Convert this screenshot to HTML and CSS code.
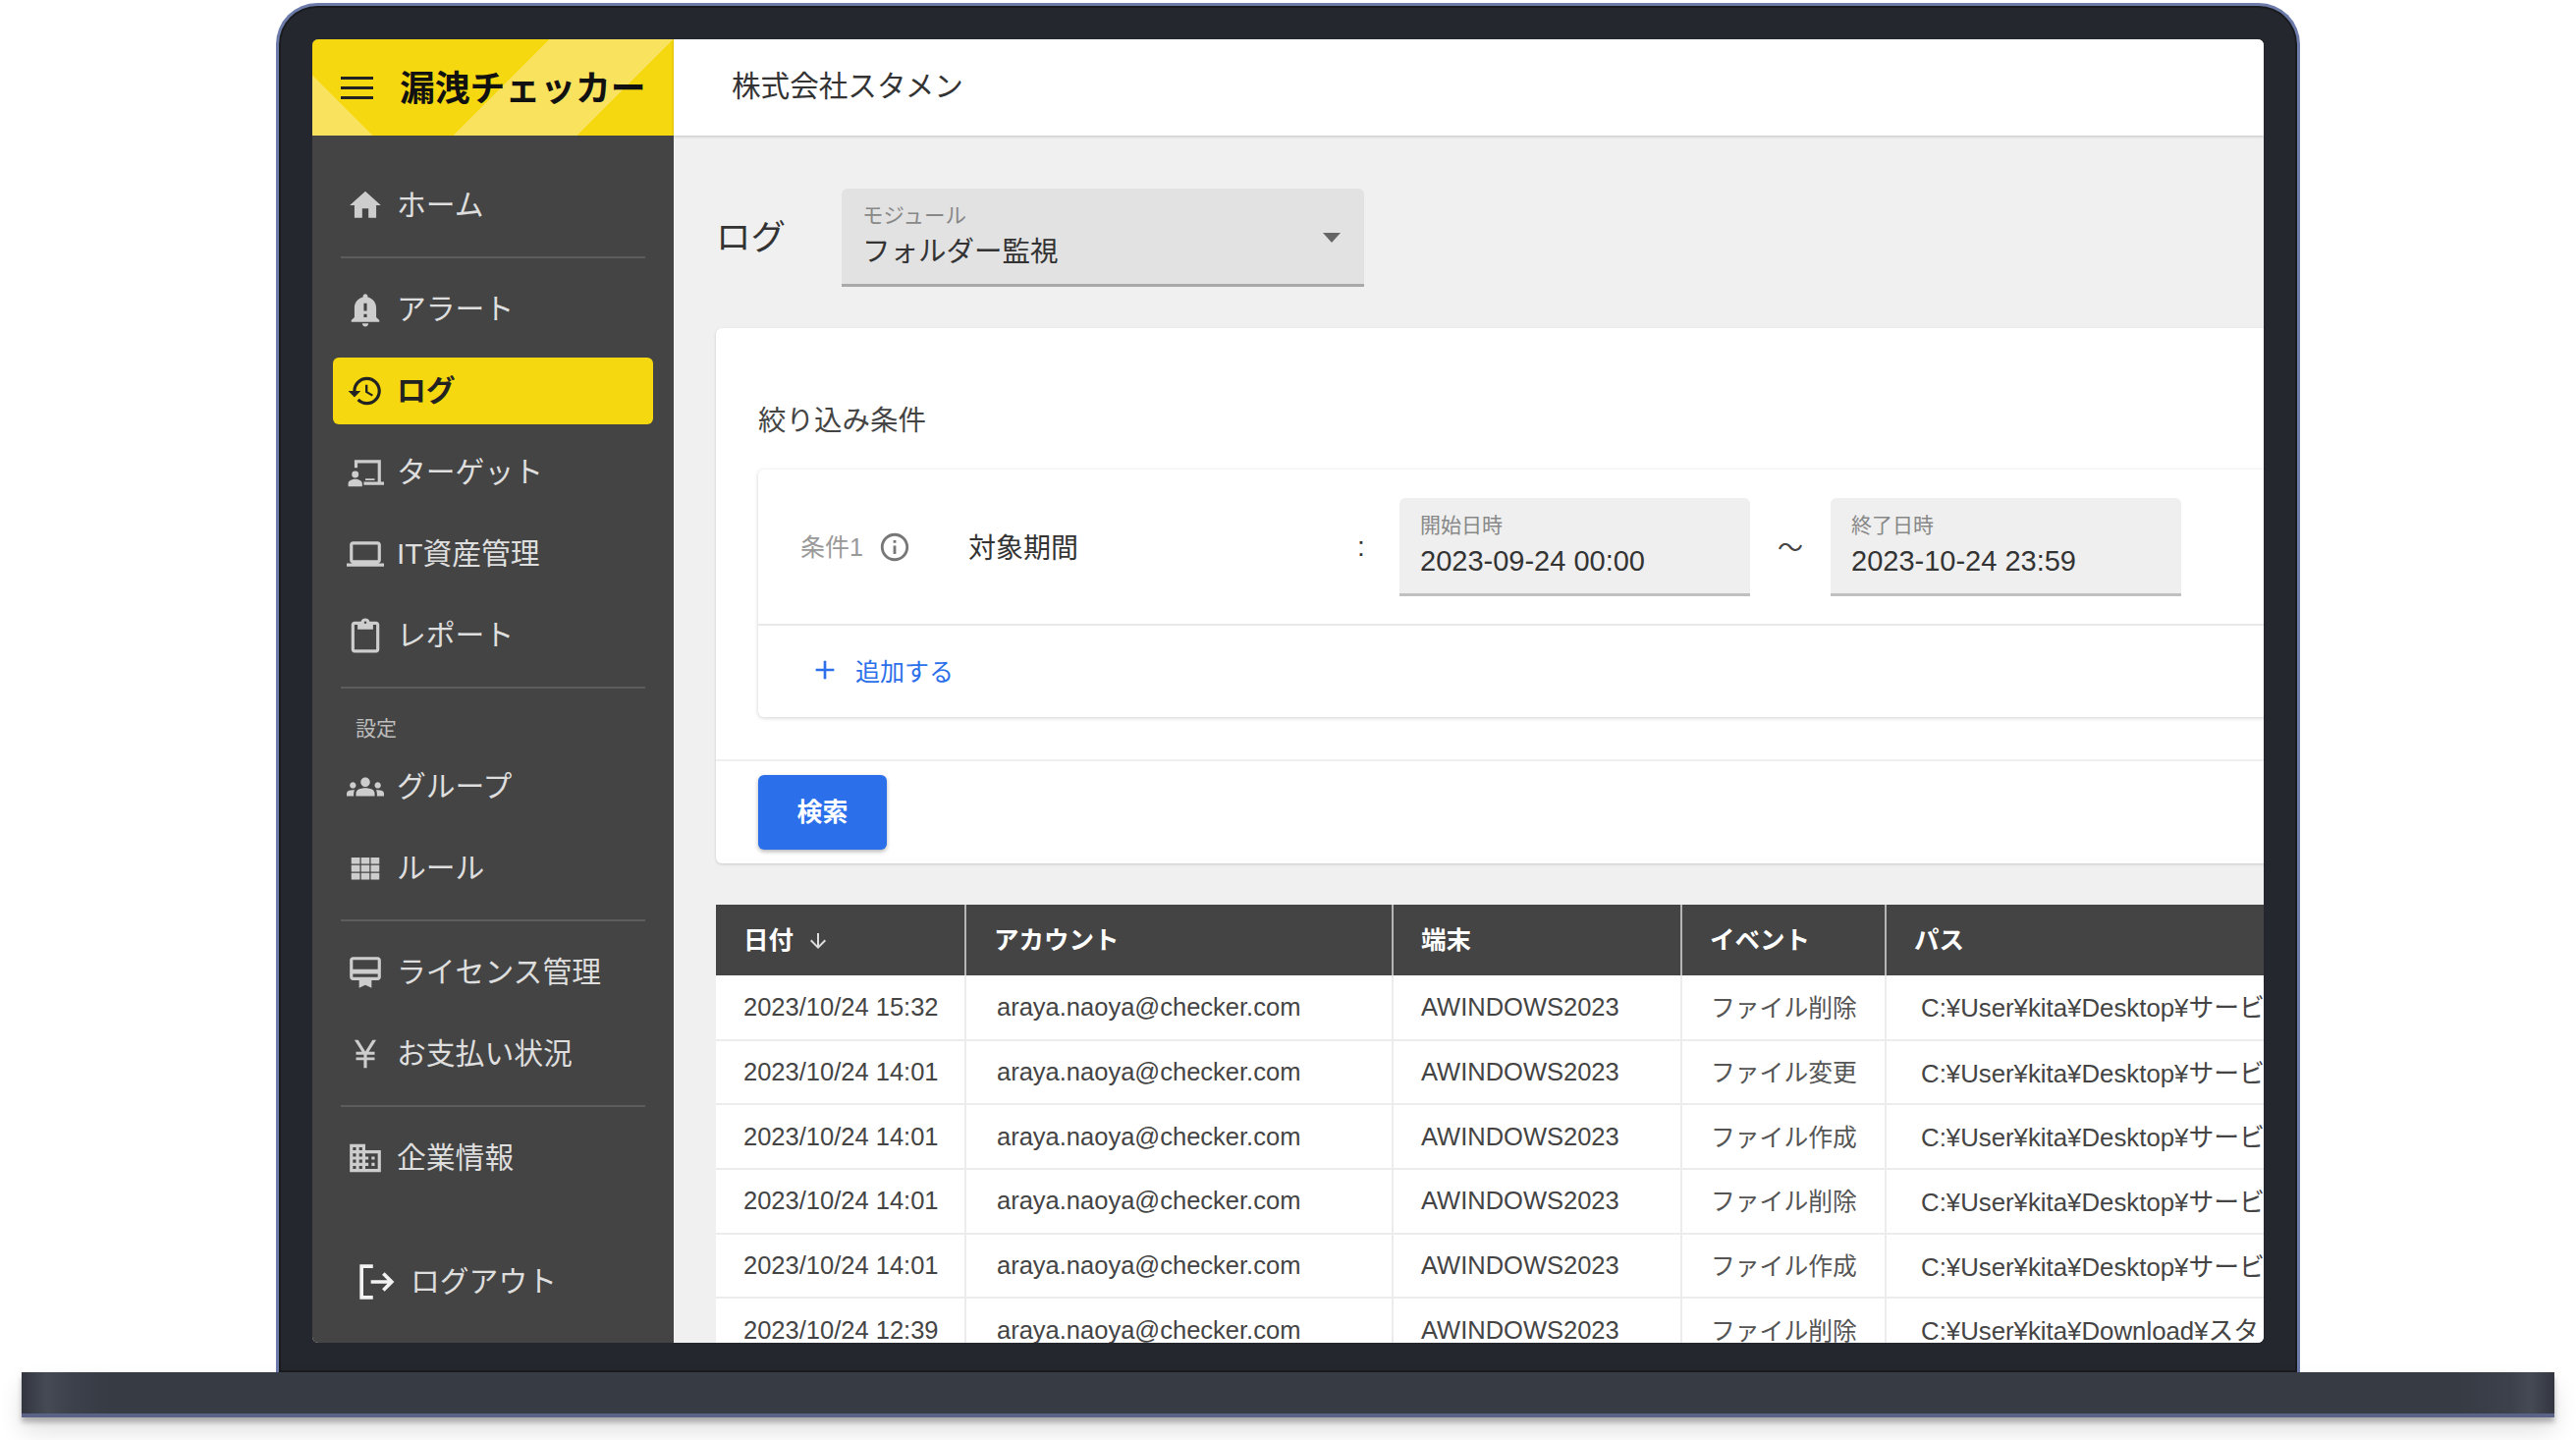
FILE: index.html
```html
<!DOCTYPE html>
<html lang="ja">

<head>
     <meta charset="UTF-8">
     <title>漏洩チェッカー</title>
     <link rel="stylesheet" href="styles.css">
</head>

<body>
     <div class="lid">
          <div class="screen">
               <aside class="sidebar">
                    <div class="logo">
                         <div class="burger"><span></span><span></span><span></span></div>
                         <div class="logo-text">漏洩チェッカー</div>
                    </div>
                    <nav class="nav">
                         <a class="nav-item"><svg viewBox="0 0 24 24"><path d="M10 20v-6h4v6h5v-8h3L12 3 2 12h3v8z"/></svg>ホーム</a>
                         <div class="divider"></div>
                         <a class="nav-item"><svg viewBox="0 0 24 24"><path d="M12 23c1.1 0 2-.9 2-2h-4c0 1.100.9 2 2 2zm7-6v-6c0-3.350-2.350-6.150-5.500-6.830V3.500c0-.83-.67-1.500-1.500-1.500s-1.500.67-1.500 1.500v.67C7.350 4.850 5 7.650 5 11v6l-2 2v1h18v-1l-2-2zm-6 0h-2v-2h2v2zm0-4h-2V8h2v5z"/></svg>アラート</a>
                         <a class="nav-item active"><svg viewBox="0 0 24 24"><path d="M13 3c-4.970 0-9 4.030-9 9H1l3.890 3.890.07.14L9 12H6c0-3.870 3.130-7 7-7s7 3.130 7 7-3.130 7-7 7c-1.930 0-3.680-.79-4.940-2.060l-1.420 1.420C8.270 19.990 10.510 21 13 21c4.970 0 9-4.030 9-9s-4.030-9-9-9zm-1 5v5l4.280 2.540.72-1.210-3.500-2.080V8H12z"/></svg>ログ</a>
                         <a class="nav-item"><svg viewBox="0 0 24 24"><path d="M5 4h17v14h2v2H11v-2h9V6H7v3H5V4zM5.500 11a2.200 2.200 0 1 1 0 4.400 2.200 2.200 0 0 1 0-4.400zM1 21v-2c0-1.700 2.500-2.800 4.500-2.800S10 17.300 10 19v2H1zM12 16h6v1h-6z"/></svg>ターゲット</a>
                         <a class="nav-item"><svg viewBox="0 0 24 24"><path d="M20 18c1.100 0 2-.9 2-2V6c0-1.100-.9-2-2-2H4c-1.100 0-2 .9-2 2v10c0 1.100.9 2 2 2H0v2h24v-2h-4zM4 6h16v10H4V6z"/></svg>IT資産管理</a>
                         <a class="nav-item"><svg viewBox="0 0 24 24"><path d="M19 3h-4.200C14.400 1.800 13.300 1 12 1s-2.400.8-2.800 2H5c-1.100 0-2 .9-2 2v16c0 1.100.9 2 2 2h14c1.100 0 2-.9 2-2V5c0-1.100-.9-2-2-2zm-7-.2c.4 0 .8.400.8.800s-.4.800-.8.800-.8-.4-.8-.8.400-.8.800-.8zM19 21H5V5h2v3h10V5h2v16z"/></svg>レポート</a>
                         <div class="divider"></div>
                         <div class="nav-label">設定</div>
                         <a class="nav-item"><svg viewBox="0 0 24 24"><path d="M4 13c1.100 0 2-.9 2-2s-.9-2-2-2-2 .9-2 2 .9 2 2 2zm1.130 1.100C4.760 14.040 4.390 14 4 14c-.99 0-1.930.21-2.780.58C.48 14.900 0 15.620 0 16.430V18h4.500v-1.610c0-.83.23-1.610.63-2.290zM20 13c1.100 0 2-.9 2-2s-.9-2-2-2-2 .9-2 2 .9 2 2 2zm4 3.430c0-.81-.48-1.530-1.220-1.850C21.930 14.210 20.990 14 20 14c-.39 0-.76.04-1.130.1.4.68.63 1.460.63 2.290V18H24v-1.570zM16.240 13.650c-1.170-.52-2.610-.9-4.240-.9-1.630 0-3.070.39-4.240.9C6.680 14.130 6 15.210 6 16.390V18h12v-1.610c0-1.180-.68-2.260-1.760-2.740zM12 12c1.660 0 3-1.340 3-3s-1.340-3-3-3-3 1.340-3 3 1.340 3 3 3z"/></svg>グループ</a>
                         <a class="nav-item"><svg viewBox="0 0 24 24"><path d="M3 5h5.500v4.200H3zM9.300 5h5.400v4.200H9.300zM15.500 5H21v4.200h-5.500zM3 10h5.500v4.200H3zM9.300 10h5.400v4.200H9.300zM15.500 10H21v4.200h-5.500zM3 15h5.500v4.200H3zM9.300 15h5.400v4.200H9.300zM15.500 15H21v4.200h-5.500z"/></svg>ルール</a>
                         <div class="divider"></div>
                         <a class="nav-item"><svg viewBox="0 0 24 24"><path d="M20 2H4c-1.100 0-2 .9-2 2v11c0 1.100.9 2 2 2h4v5l4-2 4 2v-5h4c1.100 0 2-.9 2-2V4c0-1.100-.9-2-2-2zm0 13H4v-2h16v2zm0-5H4V4h16v6z"/></svg>ライセンス管理</a>
                         <a class="nav-item"><svg viewBox="0 0 24 24"><path d="M5 3h2.400l4.600 7.400L16.600 3H19l-4.800 7.600H18v1.800h-5v1.800h5V16h-5v5h-2v-5H6v-1.800h5v-1.800H6v-1.800h3.800z"/></svg>お支払い状況</a>
                         <div class="divider"></div>
                         <a class="nav-item"><svg viewBox="0 0 24 24"><path d="M12 7V3H2v18h20V7H12zM6 19H4v-2h2v2zm0-4H4v-2h2v2zm0-4H4V9h2v2zm0-4H4V5h2v2zm4 12H8v-2h2v2zm0-4H8v-2h2v2zm0-4H8V9h2v2zm0-4H8V5h2v2zm10 12h-8v-2h2v-2h-2v-2h2v-2h-2V9h8v10zm-2-8h-2v2h2v-2zm0 4h-2v2h2v-2z"/></svg>企業情報</a>
                         <a class="nav-item logout"><svg viewBox="0 0 36 36" fill="none"><path d="M14 3H3v30h11M12 18h20M24 10l8 8-8 8" stroke-width="3.500"/></svg>ログアウト</a>
                    </nav>
               </aside>

               <div class="content">
                    <header class="topbar">株式会社スタメン</header>
                    <main class="main">
                         <div class="title-row">
                              <h1>ログ</h1>
                              <div class="select">
                                   <div class="field-label">モジュール</div>
                                   <div class="select-value">フォルダー監視</div>
                                   <span class="caret"></span>
                              </div>
                         </div>

                         <section class="card">
                              <div class="card-body">
                                   <h2>絞り込み条件</h2>
                                   <div class="cond-box">
                                        <div class="cond-row">
                                             <span class="cond-name">条件1</span>
                                             <svg class="info" viewBox="0 0 24 24"><path d="M11 7h2v2h-2zm0 4h2v6h-2zm1-9C6.480 2 2 6.480 2 12s4.480 10 10 10 10-4.480 10-10S17.520 2 12 2zm0 18c-4.410 0-8-3.590-8-8s3.590-8 8-8 8 3.590 8 8-3.590 8-8 8z"/></svg>
                                             <span class="cond-target">対象期間</span>
                                             <span class="cond-colon">:</span>
                                             <div class="date-field">
                                                  <div class="date-label">開始日時</div>
                                                  <div class="date-value">2023-09-24 00:00</div>
                                             </div>
                                             <span class="tilde">〜</span>
                                             <div class="date-field">
                                                  <div class="date-label">終了日時</div>
                                                  <div class="date-value">2023-10-24 23:59</div>
                                             </div>
                                        </div>
                                        <div class="add-row">
                                             <svg viewBox="0 0 24 24"><path d="M19 13h-6v6h-2v-6H5v-2h6V5h2v6h6v2z"/></svg>
                                             追加する
                                        </div>
                                   </div>
                              </div>
                              <div class="card-foot">
                                   <button class="search-btn">検索</button>
                              </div>
                         </section>

                         <table class="log-table">
                              <thead>
                                   <tr>
                                        <th>日付<svg class="sort" viewBox="0 0 24 24"><path d="M20 12l-1.400-1.400-5.600 5.600V4h-2v12.200l-5.600-5.600L4 12l8 8z"/></svg></th>
                                        <th>アカウント</th>
                                        <th>端末</th>
                                        <th>イベント</th>
                                        <th>パス</th>
                                   </tr>
                              </thead>
                              <tbody>
                                   <tr><td>2023/10/24 15:32</td><td>araya.naoya@checker.com</td><td>AWINDOWS2023</td><td>ファイル削除</td><td>C:¥User¥kita¥Desktop¥サービ</td></tr>
                                   <tr><td>2023/10/24 14:01</td><td>araya.naoya@checker.com</td><td>AWINDOWS2023</td><td>ファイル変更</td><td>C:¥User¥kita¥Desktop¥サービ</td></tr>
                                   <tr><td>2023/10/24 14:01</td><td>araya.naoya@checker.com</td><td>AWINDOWS2023</td><td>ファイル作成</td><td>C:¥User¥kita¥Desktop¥サービ</td></tr>
                                   <tr><td>2023/10/24 14:01</td><td>araya.naoya@checker.com</td><td>AWINDOWS2023</td><td>ファイル削除</td><td>C:¥User¥kita¥Desktop¥サービ</td></tr>
                                   <tr><td>2023/10/24 14:01</td><td>araya.naoya@checker.com</td><td>AWINDOWS2023</td><td>ファイル作成</td><td>C:¥User¥kita¥Desktop¥サービ</td></tr>
                                   <tr><td>2023/10/24 12:39</td><td>araya.naoya@checker.com</td><td>AWINDOWS2023</td><td>ファイル削除</td><td>C:¥User¥kita¥Download¥スタ</td></tr>
                              </tbody>
                         </table>
                    </main>
               </div>
          </div>
     </div>
     <div class="base"></div>
</body>

</html>
```

FILE: styles.css
```css
:root {
     --yellow: #f5d80f;
     --yellow-light: #f9e25e;
     --side: #444444;
     --blue: #2b70ea;
     --bezel: #24272e;
}

* {
     box-sizing: border-box;
     margin: 0;
     padding: 0;
}

html,
body {
     height: 1466px;
     overflow: hidden;
}

body {
     font-family: "Liberation Sans", "Noto Sans CJK JP", sans-serif;
     background: white;
     color: #444;
}

/* laptop frame */
.lid {
     width: 2061px;
     height: 1394px;
     margin: 3px 0 0 281px;
     padding: 34px;
     background: var(--bezel);
     border: 3px solid #6c7ba9;
     border-bottom: none;
     border-radius: 42px 42px 0 0;
     box-shadow: inset 0 0 0 2px #191b1f;
}

.base {
     width: 2579px;
     height: 46px;
     margin-left: 22px;
     border-bottom: 4px solid #5b6288;
     background: linear-gradient(90deg, #33363f 0, #454a55 26px, #3d414b 50px, #373b44 90px, #373b44 2480px, #3d414b 2535px, #454a55 2555px, #33363f 100%);
     box-shadow: 0 5px 5px rgba(0, 0, 0, 0.25), 0 14px 24px rgba(0, 0, 0, 0.12);
}

.screen {
     display: flex;
     height: 1327px;
     background: #f0f0f0;
     border-radius: 6px;
     overflow: hidden;
}

/* sidebar */
.sidebar {
     flex: 0 0 368px;
     background: var(--side);
     display: flex;
     flex-direction: column;
}

.logo {
     height: 98px;
     display: flex;
     align-items: center;
     padding-left: 29px;
     gap: 27px;
     background-color: var(--yellow);
     background-image:
          linear-gradient(135deg, transparent 171px, var(--yellow-light) 171px, var(--yellow-light) 260px, transparent 260px),
          linear-gradient(225deg, transparent 286px, var(--yellow-light) 286px);
}

.burger {
     width: 33px;
     display: flex;
     flex-direction: column;
     gap: 7px;
}

.burger span {
     height: 3px;
     background: #222;
}

.logo-text {
     padding-bottom: 5px;
     font-family: "Noto Sans CJK JP", sans-serif;
     font-size: 35.800px;
     font-weight: 700;
     color: #111;
     white-space: nowrap;
}

.nav {
     padding: 37px 21px 0;
     display: flex;
     flex-direction: column;
     gap: 15px;
}

.nav-item {
     height: 68px;
     display: flex;
     align-items: center;
     gap: 13px;
     padding: 0 0 7px 14px;
     border-radius: 6px;
     font-size: 29.800px;
     color: #dedede;
     white-space: nowrap;
}

.nav-item svg {
     flex: none;
     width: 38px;
     height: 38px;
     margin-top: 7px;
     fill: #cdcdcd;
}

.nav-item.active {
     background: var(--yellow);
     color: #222;
     font-weight: 700;
}

.nav-item.active svg {
     fill: #222;
}

.nav-item.logout {
     margin-top: 43px;
     padding-left: 26px;
     gap: 15px;
}

.nav-item.logout svg {
     fill: none;
     stroke: #f2f2f2;
}

.divider {
     height: 2px;
     margin: 3px 8px 3px 8px;
     background: #5d5d5d;
}

.nav-label {
     margin: 0 0 0 23px;
     height: 33px;
     padding-top: 10px;
     font-size: 21px;
     line-height: 26px;
     color: #bdbdbd;
}

/* right side */
.content {
     flex: 1;
     min-width: 0;
     display: flex;
     flex-direction: column;
}

.topbar {
     height: 98px;
     flex: none;
     padding: 0 0 8px 59px;
     display: flex;
     align-items: center;
     background: white;
     font-size: 29.600px;
     color: #333;
     box-shadow: 0 1px 3px rgba(0, 0, 0, 0.2);
     position: relative;
}

.main {
     padding: 54px 0 0 43px;
}

.title-row {
     display: flex;
     align-items: center;
     gap: 60px;
}

h1 {
     padding-bottom: 8px;
     width: 68px;
     font-size: 35.500px;
     font-weight: 400;
     white-space: nowrap;
     color: #333;
}

.select {
     position: relative;
     width: 532px;
     height: 100px;
     padding: 13px 21px 0;
     background: #e2e2e2;
     border-bottom: 3px solid #a9a9a9;
     border-radius: 6px 6px 0 0;
}

.field-label {
     font-size: 21.500px;
     line-height: 30px;
     color: #888;
}

.select-value {
     padding-top: 1px;
     font-size: 28.500px;
     line-height: 40px;
     color: #333;
}

.caret {
     position: absolute;
     right: 24px;
     top: 45px;
     border-left: 9px solid transparent;
     border-right: 9px solid transparent;
     border-top: 10px solid #666;
}

.card {
     width: 1700px;
     margin-top: 42px;
     background: white;
     border-radius: 6px;
     box-shadow: 0 1px 3px rgba(0, 0, 0, 0.16);
}

.card-body {
     padding: 74px 0 43px 43px;
     border-bottom: 2px solid #efefef;
}

h2 {
     font-size: 28.500px;
     font-weight: 400;
     line-height: 40px;
     color: #444;
     margin-bottom: 30px;
}

.cond-box {
     border-radius: 6px;
     box-shadow: 0 1px 4px rgba(0, 0, 0, 0.18);
}

.cond-row {
     height: 159px;
     display: flex;
     align-items: center;
     padding-left: 43px;
     border-bottom: 2px solid #e9e9e9;
}

.cond-name {
     width: 79px;
     padding-bottom: 3px;
     font-size: 25px;
     color: #999;
}

.info {
     width: 34px;
     height: 34px;
     fill: #777;
}

.cond-target {
     width: 396px;
     margin-left: 58px;
     padding-bottom: 2px;
     font-size: 28px;
     color: #333;
}

.cond-colon {
     width: 43px;
     font-size: 28px;
     color: #333;
}

.date-field {
     width: 357px;
     height: 100px;
     padding: 13px 21px 0;
     background: #efefef;
     border-bottom: 3px solid #c0c0c0;
     border-radius: 6px 6px 0 0;
}

.date-label {
     font-size: 21px;
     line-height: 30px;
     color: #888;
}

.date-value {
     font-size: 29px;
     line-height: 42px;
     color: #333;
}

.tilde {
     width: 82px;
     padding-bottom: 3px;
     text-align: center;
     font-family: "Noto Sans CJK JP", sans-serif;
     font-size: 26px;
     color: #444;
}

.add-row {
     height: 93px;
     display: flex;
     align-items: center;
     padding: 0 0 3px 52px;
     gap: 15px;
     font-size: 25px;
     color: var(--blue);
}

.add-row svg {
     width: 32px;
     height: 32px;
     fill: var(--blue);
}

.card-foot {
     padding: 14px 0 14px 43px;
}

.search-btn {
     display: block;
     width: 131px;
     height: 76px;
     padding-bottom: 5px;
     border: none;
     border-radius: 6px;
     background: var(--blue);
     color: white;
     font-family: inherit;
     font-size: 26px;
     font-weight: 700;
     box-shadow: 0 2px 4px rgba(0, 0, 0, 0.3);
}

/* log table */
.log-table {
     width: 1891px;
     margin-top: 42px;
     table-layout: fixed;
     border-collapse: collapse;
     background: white;
}

.log-table th:nth-child(1) { width: 254px; }
.log-table th:nth-child(2) { width: 435px; }
.log-table th:nth-child(3) { width: 294px; }
.log-table th:nth-child(4) { width: 208px; }

.log-table th {
     height: 72px;
     padding: 0 0 6px 28px;
     background: var(--side);
     border-right: 2px solid #b5b5b5;
     color: white;
     font-size: 25.500px;
     font-weight: 700;
     text-align: left;
}

.sort {
     width: 24px;
     height: 24px;
     margin-left: 13px;
     vertical-align: -4px;
     fill: #ddd;
}

.log-table td {
     height: 65.700px;
     padding-left: 28px;
     border-right: 2px solid #ececec;
     border-bottom: 2px solid #ececec;
     font-size: 25.500px;
     color: #444;
     white-space: nowrap;
     overflow: hidden;
}

.log-table td:nth-child(2) { padding-left: 31px; }
.log-table td:nth-child(4) { padding: 0 0 3px 29px; font-size: 24.800px; color: #555; }
.log-table td:nth-child(5) { padding: 0 0 3px 35px; font-size: 25.800px; }
```
